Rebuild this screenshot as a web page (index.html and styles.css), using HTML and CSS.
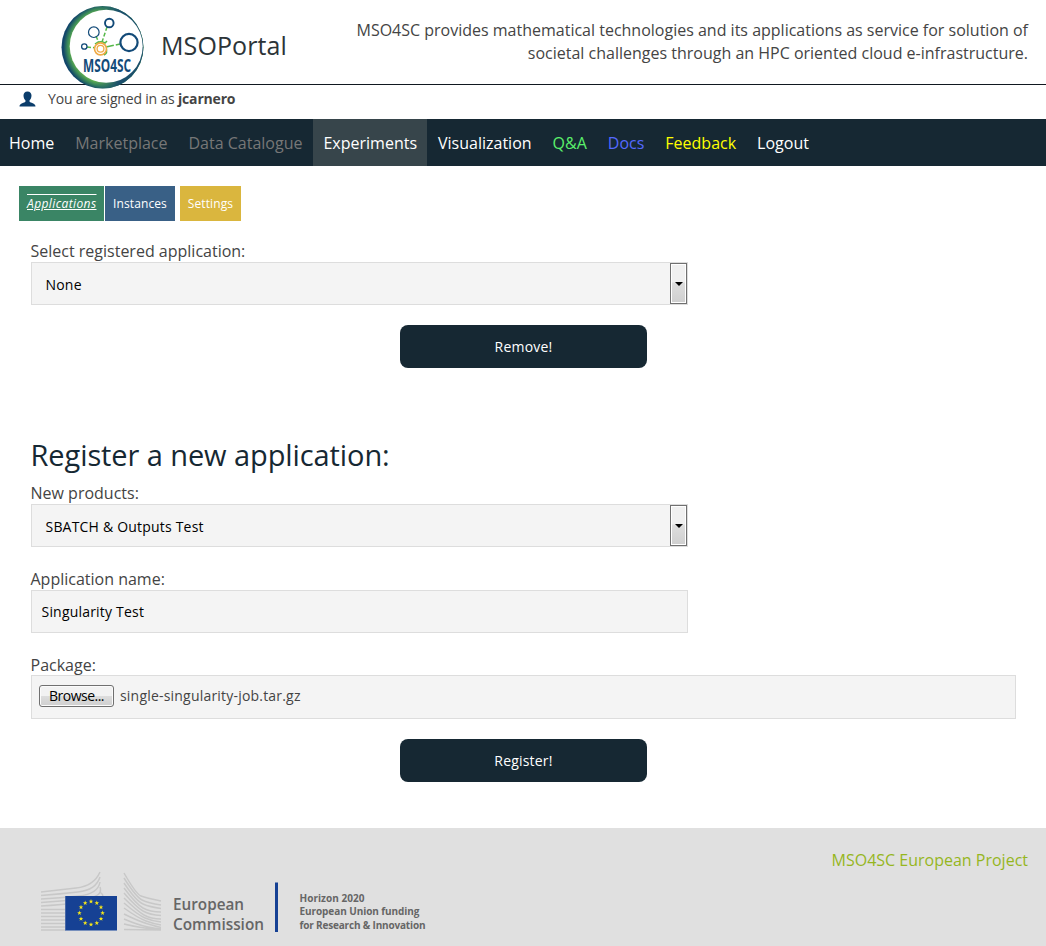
FILE: index.html
```html
<!DOCTYPE html>
<html lang="en">
<head>
<meta charset="utf-8">
<title>MSOPortal</title>
<link rel="stylesheet" href="styles.css">
</head>
<body>
<header class="header">
  <svg class="logo" viewBox="0 0 84 84">
    <defs>
      <radialGradient id="ring" cx="46" cy="42" r="46" gradientUnits="userSpaceOnUse">
        <stop offset="0.79" stop-color="#5fae50"/>
        <stop offset="0.86" stop-color="#39875a"/>
        <stop offset="0.95" stop-color="#12466a"/>
      </radialGradient>
      <linearGradient id="rim" x1="0" x2="1"><stop offset="0.4" stop-color="#1b5a6c" stop-opacity="0"/><stop offset="0.7" stop-color="#1b4f6c"/></linearGradient>
    </defs>
    <ellipse cx="41.500" cy="42.300" rx="41" ry="41.300" fill="url(#ring)"/>
    <ellipse cx="41.500" cy="42.300" rx="41" ry="41.300" fill="url(#rim)"/>
    <circle cx="45.200" cy="41.300" r="36.500" fill="#fff"/>
    <g fill="none" stroke="#55b848" stroke-width="1.500">
      <path d="M26 42l8 .8M35 31l3 7M46 22l-5 15" stroke-dasharray="4 2"/>
      <path d="M45 42l14-3" stroke-dasharray="8 2"/>
      <path d="M34 39q5-4 10-1l2-2M45 43q2 5-2 7"/>
    </g>
    <g fill="none" stroke="#124a78">
      <circle cx="23.300" cy="41.500" r="2.700" stroke-width="1.300"/>
      <circle cx="32.800" cy="27.200" r="5.300" stroke-width="1.200"/>
      <circle cx="48.300" cy="18" r="4.300" stroke-width="1.900"/>
      <circle cx="68" cy="37.500" r="8.600" stroke-width="2.200"/>
    </g>
    <circle cx="39.500" cy="43.800" r="6" fill="#fff" stroke="#f0aa45" stroke-width="1.700"/>
    <circle cx="39.500" cy="43.800" r="3.400" fill="none" stroke="#f0aa45" stroke-width="1.300"/>
    <text x="22" y="67" textLength="48" lengthAdjust="spacingAndGlyphs" class="logo-text">MSO4SC</text>
  </svg>
  <div class="brand">MSOPortal</div>
  <p class="tagline">MSO4SC provides mathematical technologies and its applications as service for solution of<br>societal challenges through an HPC oriented cloud e-infrastructure.</p>
</header>
<div class="user">
  <svg class="user-icon" viewBox="0 0 17 16"><path fill="#0b3d6b" d="M8.500.5c-2.700 0-4 1.700-4 4 0 2.400.9 3.800 2 4.900v1.200C5.800 12.300.5 12 .5 15.500h16c0-3.500-5.300-3.200-6-4.900V9.400c1.100-1.100 2-2.500 2-4.900 0-2.300-1.300-4-4-4z"/></svg>
  <span>You are signed in as <b>jcarnero</b></span>
</div>
<nav class="nav">
  <a>Home</a><a class="muted">Marketplace</a><a class="muted">Data Catalogue</a><a class="active">Experiments</a><a>Visualization</a><a class="green">Q&amp;A</a><a class="blue">Docs</a><a class="yellow">Feedback</a><a>Logout</a>
</nav>
<div class="tabs"><a class="tab tab-apps">Applications</a><a class="tab tab-inst">Instances</a><a class="tab tab-set">Settings</a></div>
<main class="main">
  <div class="label">Select registered application:</div>
  <div class="field select"><span>None</span><i class="arrow"></i></div>
  <div class="button">Remove!</div>
  <h2 class="title">Register a new application:</h2>
  <div class="label">New products:</div>
  <div class="field select"><span>SBATCH &amp; Outputs Test</span><i class="arrow"></i></div>
  <div class="label spaced">Application name:</div>
  <div class="field input">Singularity Test</div>
  <div class="label spaced tight">Package:</div>
  <div class="field file"><span class="browse"><span class="browse-text">Browse...</span></span><span>single-singularity-job.tar.gz</span></div>
  <div class="button">Register!</div>
</main>
<footer class="footer">
  <svg class="ec" viewBox="0 0 400 70">
    <g fill="none" stroke="#c8c8c8" stroke-width="1.500">
      <path d="M1 22Q18 20 36 18T60 2M1 25.500Q20 24 38 22T60 7M1 29Q20 28 39 26T60 12M1 32.500Q20 31 42 29T60 17M1 36Q20 35 45 32T60 22M1 39.500H25M1 43H25M1 46.500H25M1 50H25M1 53.500H25M1 57H25M1 60H25"/>
      <path d="M84 3Q96 24 101 26T121 31M84 8Q96 27 102 30T121 35M84 13Q96 31 103 34T121 38.500M84 18Q96 34 103 38T121 42M84 23Q96 37 103 41T121 45.500M84 28Q97 41 104 45T121 49M84 33Q98 45 105 48T121 52M84 38Q98 48 106 51T121 55M84 44Q98 51 108 54T121 57.500M84 49Q98 55 108 57T121 59M84 54Q100 58 121 60M84 59.500L121 60"/>
    </g>
    <rect x="25" y="26" width="52" height="35" fill="#7890bd"/>
    <rect x="25.500" y="26" width="51.500" height="34" fill="#164194"/>
    <defs><path id="star" fill="#f3e51b" d="M0-2.400L.6-.75 2.300-.75 .95.3 1.450 1.950 0 .95-1.450 1.950-.95.3-2.300-.75-.6-.75z"/></defs>
    <use href="#star" x="51" y="31.500"/><use href="#star" x="56.800" y="33"/><use href="#star" x="61" y="37.200"/><use href="#star" x="62.600" y="43"/><use href="#star" x="61" y="48.800"/><use href="#star" x="56.800" y="53"/><use href="#star" x="51" y="54.600"/><use href="#star" x="45.200" y="53"/><use href="#star" x="41" y="48.800"/><use href="#star" x="39.400" y="43"/><use href="#star" x="41" y="37.200"/><use href="#star" x="45.200" y="33"/>
    <g class="ec-name"><text x="133" y="40.300" textLength="71" lengthAdjust="spacingAndGlyphs">European</text><text x="133" y="60" textLength="91" lengthAdjust="spacingAndGlyphs">Commission</text></g>
    <rect x="235" y="12.500" width="3" height="49.500" fill="#164194"/>
    <g class="ec-fund"><text x="259.500" y="31.500" textLength="65">Horizon 2020</text><text x="259.500" y="45" textLength="120">European Union funding</text><text x="259.500" y="58.500" textLength="126">for Research &amp; Innovation</text></g>
  </svg>
  <a class="project">MSO4SC European Project</a>
</footer>
</body>
</html>
```
FILE: styles.css
```css
* { box-sizing: border-box; }
body { margin: 0; background: #fff; color: #444; font: 16px/23px "Open Sans", sans-serif; height: 946px; display: flex; flex-direction: column; overflow: hidden; }
.header { height: 85px; flex: none; border-bottom: 1px solid #111820; display: flex; align-items: flex-start; padding: 5px 18px 0 61px; }
.logo { width: 84px; height: 84px; flex: none; position: relative; z-index: 1; overflow: visible; }
.logo-text { font: bold 18px "Open Sans", sans-serif; fill: #124a78; }
.brand { margin: 22px 0 0 16px; font-size: 25px; line-height: 36px; letter-spacing: 0.1px; color: #2c3438; }
.tagline { margin: 14px 0 0 auto; text-align: right; white-space: nowrap; }
.user { height: 34px; flex: none; display: flex; padding: 3px 0 0 19px; font-size: 14px; line-height: 22px; letter-spacing: -0.18px; }
.user-icon { width: 17px; height: 16px; margin: 3px 12px 0 0; }
.nav { height: 47px; flex: none; background: #162833; display: flex; line-height: 49px; }
.nav a { padding: 0 10px; margin-right: 1px; color: #fff; white-space: nowrap; }
.nav a:first-child { padding-left: 9px; }
.nav .active { background: #37454b; }
.nav .muted { color: #777; }
.nav .green { color: #5bf06b; }
.nav .blue { color: #5468ff; }
.nav .yellow { color: #ff0; }
.tabs { display: flex; margin: 20px 0 0 19px; height: 35px; flex: none; font-size: 12px; line-height: 35px; color: #fff; }
.tab { text-align: center; }
.tab-apps { width: 85px; padding-left: 8px; text-align: left; letter-spacing: 0.4px; background: #3a8565; font-style: italic; text-decoration: underline overline; margin-right: 1px; }
.tab-inst { width: 70px; letter-spacing: 0.1px; background: #396086; margin-right: 5px; }
.tab-set { width: 61px; letter-spacing: 0.1px; background: #dab63e; }
.main { padding: 18px 30px 0 31px; }
.label { height: 23px; line-height: 24px; margin-left: -0.5px; }
.field { width: 657px; height: 43px; background: #f4f4f4; border: 1px solid #ddd; font-size: 14px; letter-spacing: 0.2px; color: #000; display: flex; align-items: center; }
.select { padding-left: 13.5px; justify-content: space-between; }
.select span { padding-top: 2px; }
.arrow { width: 17px; height: 41px; border: 1px solid #707070; box-shadow: inset 0 0 0 1px #fff; background: linear-gradient(#f0f0f0 0 45%, #ddd 50%, #cfcfcf); display: flex; align-items: center; justify-content: center; }
.arrow::after { content: ""; border: 4px solid transparent; border-top-color: #000; border-bottom: 0; }
.button { width: 247px; height: 43px; margin: 20px 0 0 369px; border-radius: 8px; background: #162833; color: #fff; font-size: 14px; letter-spacing: 0.2px; line-height: 43px; text-align: center; }
.title { margin: 67px 0 7px -0.5px; font-size: 29px; line-height: 39px; letter-spacing: -0.09px; font-weight: 400; color: #162833; }
.spaced { margin-top: 20px; }
.tight { height: 22px; }
.input { padding-left: 9.5px; }
.file { width: 985px; height: 44px; padding: 0 0 3px 7px; color: #444; }
.browse { width: 75px; height: 22px; margin-right: 6px; border: 1px solid #707070; border-radius: 3px; box-shadow: inset 0 0 0 1px #fbfbfb; background: linear-gradient(#f2f2f2 0 48%, #ddd 50%, #cfcfcf); color: #000; text-align: center; line-height: 20px; }
.browse-text { letter-spacing: -0.5px; }
.footer { margin-top: auto; height: 118px; flex: none; background: #e0e0e0; display: flex; justify-content: space-between; padding: 20px 18px 0 40px; }
.ec { width: 400px; height: 70px; margin-top: 22px; }
.ec-name { font: 600 16px "Open Sans", sans-serif; fill: #666; }
.ec-fund { font: bold 10px "Open Sans", sans-serif; fill: #666; }
.project { margin-top: 1px; color: #96b61e; }
```
